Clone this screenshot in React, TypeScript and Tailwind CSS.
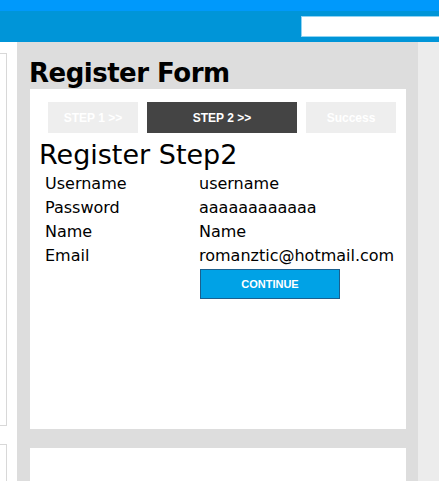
export default function App() {
  const rows = [
    ["Username", "username"],
    ["Password", "aaaaaaaaaaaa"],
    ["Name", "Name"],
    ["Email", "romanztic@hotmail.com"],
  ];
  const sans = { fontFamily: '"DejaVu Sans", sans-serif' };
  const arial = { fontFamily: '"Liberation Sans", Arial, sans-serif' };
  return (
    <div className="w-[439px] h-[481px] overflow-hidden bg-[#ececec]">
      {/* header */}
      <div className="h-[11px] bg-[#0099fb]" />
      <div className="h-[31px] bg-[#0095d8] flex pt-[5px] pl-[301px]">
        <div className="h-[21px] flex-1 bg-white border border-[#8fd3f2] border-r-0" />
      </div>
      {/* body */}
      <div className="flex h-[439px]">
        <div className="w-[17px] bg-white flex flex-col">
          <div className="mt-[11px] h-[373px] w-[7px] border border-l-0 border-[#d8d8d8]" />
          <div className="mt-[18px] flex-1 w-[7px] border border-l-0 border-b-0 border-[#d8d8d8]" />
        </div>
        <div className="w-[401px] bg-[#dddddd] flex flex-col">
          <div className="h-[47px] pt-[16px] pl-[12px]">
            <h1
              className="text-[26px] leading-[30px] font-bold text-black tracking-[-0.5px]"
              style={sans}
            >
              Register Form
            </h1>
          </div>
          <div className="ml-[13px] mr-[12px] h-[340px] bg-white pt-[13px] flex flex-col">
            <div className="flex gap-[9px] pl-[18px]" style={arial}>
              <div className="w-[90px] h-[31px] bg-[#eeeeee] text-white text-[12px] font-bold flex items-center justify-center">
                STEP 1 &gt;&gt;
              </div>
              <div className="w-[150px] h-[31px] bg-[#444444] text-white text-[12px] font-bold flex items-center justify-center">
                STEP 2 &gt;&gt;
              </div>
              <div className="w-[90px] h-[31px] bg-[#eeeeee] text-white text-[12px] font-bold flex items-center justify-center">
                Success
              </div>
            </div>
            <h2
              className="mt-[6px] pl-[9px] text-[27px] leading-[32px] text-black"
              style={sans}
            >
              Register Step2
            </h2>
            <div className="mt-[1px] pl-[15px] flex flex-col" style={sans}>
              {rows.map(([k, v]) => (
                <div key={k} className="flex h-[24px] text-[16px] leading-[24px] text-black">
                  <div className="w-[154px]">{k}</div>
                  <div>{v}</div>
                </div>
              ))}
              <div className="flex mt-[1px]">
                <div className="w-[155px]" />
                <button
                  className="w-[140px] h-[30px] bg-[#00a2e6] border border-[#1b5f8e] text-white text-[11px] font-bold flex items-center justify-center"
                  style={arial}
                >
                  CONTINUE
                </button>
              </div>
            </div>
          </div>
          <div className="ml-[13px] mr-[12px] mt-[19px] flex-1 bg-white" />
        </div>
        <div className="flex-1 bg-[#ececec]" />
      </div>
    </div>
  );
}
